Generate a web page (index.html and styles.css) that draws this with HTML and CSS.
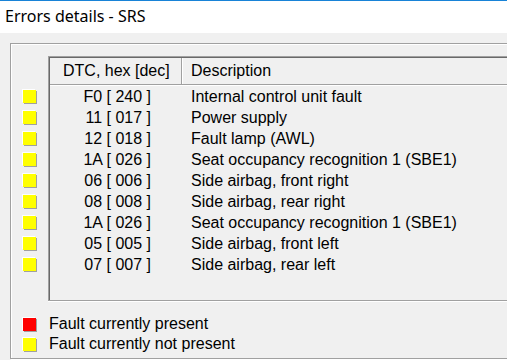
FILE: index.html
```html
<!DOCTYPE html>
<html lang="en">
<head>
  <meta charset="UTF-8">
  <title>Errors details - SRS</title>
  <link rel="stylesheet" href="styles.css">
</head>
<body>
  <div class="titlebar">Errors details - SRS</div>
  <div class="client">
    <div class="group">
      <div class="table-area">
        <div class="markers">
          <span class="led yellow"></span>
          <span class="led yellow"></span>
          <span class="led yellow"></span>
          <span class="led yellow"></span>
          <span class="led yellow"></span>
          <span class="led yellow"></span>
          <span class="led yellow"></span>
          <span class="led yellow"></span>
          <span class="led yellow"></span>
        </div>
        <div class="list">
          <div class="list-head">
            <div class="col-dtc">DTC, hex [dec]</div>
            <div class="col-desc">Description</div>
          </div>
          <div class="list-body">
            <div class="row"><div class="dtc">F0 [ 240 ]</div><div class="desc">Internal control unit fault</div></div>
            <div class="row"><div class="dtc">11 [ 017 ]</div><div class="desc">Power supply</div></div>
            <div class="row"><div class="dtc">12 [ 018 ]</div><div class="desc">Fault lamp (AWL)</div></div>
            <div class="row"><div class="dtc">1A [ 026 ]</div><div class="desc">Seat occupancy recognition 1 (SBE1)</div></div>
            <div class="row"><div class="dtc">06 [ 006 ]</div><div class="desc">Side airbag, front right</div></div>
            <div class="row"><div class="dtc">08 [ 008 ]</div><div class="desc">Side airbag, rear right</div></div>
            <div class="row"><div class="dtc">1A [ 026 ]</div><div class="desc">Seat occupancy recognition 1 (SBE1)</div></div>
            <div class="row"><div class="dtc">05 [ 005 ]</div><div class="desc">Side airbag, front left</div></div>
            <div class="row"><div class="dtc">07 [ 007 ]</div><div class="desc">Side airbag, rear left</div></div>
          </div>
        </div>
      </div>
      <div class="legend">
        <div class="legend-row"><span class="led red"></span>Fault currently present</div>
        <div class="legend-row"><span class="led yellow"></span>Fault currently not present</div>
      </div>
    </div>
  </div>
</body>
</html>
```

FILE: styles.css
```css
body {
  margin: 0;
  width: 507px;
  height: 360px;
  overflow: hidden;
  background: #f0f0f0;
  font-family: "Liberation Sans", Arial, sans-serif;
  font-size: 16px;
  color: #000;
}
.titlebar {
  height: 32px;
  border-top: 1px solid #1883d7;
  background: #fff;
  padding-left: 5px;
  font-family: "Segoe UI", "Noto Sans", sans-serif;
  font-size: 16px;
  line-height: 31px;
}
.client {
  padding: 10px 0 0 10px;
}
.group {
  width: 520px;
  height: 316px;
  border: 1px solid #a0a0a0;
  box-shadow: inset 1px 1px 0 #fff, 1px 1px 0 #fff;
  box-sizing: border-box;
}
.table-area {
  display: flex;
  padding-top: 12px;
}
.markers {
  width: 37px;
  padding-top: 34px;
  display: flex;
  flex-direction: column;
  align-items: center;
  gap: 8px;
}
.led {
  display: inline-block;
  width: 13px;
  height: 13px;
  box-shadow: 1px 1px 0 #a0a0a0, -1px -1px 0 #fff;
}
.yellow {
  background: #ffff00;
}
.red {
  background: #ff0000;
}
.list {
  flex: 1;
  height: 245px;
  border-top: 1px solid #a0a0a0;
  border-left: 1px solid #a0a0a0;
  border-bottom: 1px solid #a0a0a0;
  box-shadow: inset 1px 1px 0 #696969, 0 1px 0 #fff;
  box-sizing: border-box;
}
.list-head {
  display: flex;
  height: 26px;
  margin: 1px 0 0 1px;
  border-bottom: 1px solid #a0a0a0;
  box-shadow: 0 1px 0 #fff;
  line-height: 26px;
}
.col-dtc {
  width: 132px;
  padding-left: 13px;
  box-sizing: border-box;
  border-right: 1px solid #a0a0a0;
  box-shadow: 1px 0 0 #fff;
}
.col-desc {
  padding-left: 9px;
}
.list-body {
  padding-top: 1px;
}
.row {
  display: flex;
  height: 21px;
  line-height: 21px;
}
.dtc {
  width: 102px;
  text-align: right;
}
.desc {
  padding-left: 40px;
}
.legend {
  padding: 13px 0 0 12px;
}
.legend-row {
  display: flex;
  align-items: center;
  height: 20px;
}
.legend-row .led {
  margin-right: 13px;
}
```
